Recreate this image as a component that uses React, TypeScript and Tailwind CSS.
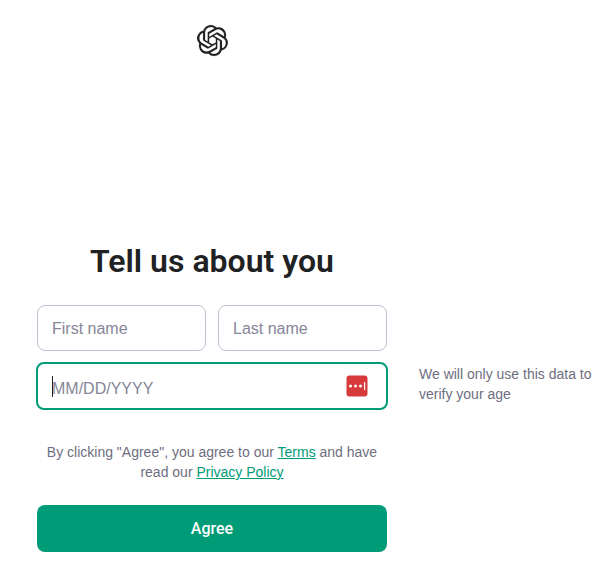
import type { ComponentProps } from "react";
import { SiOpenai } from "react-icons/si";

function Field({ label, className = "", ...rest }: ComponentProps<"input"> & { label: string }) {
  return (
    <input
      type="text"
      aria-label={label}
      className={`w-full min-w-0 flex-1 rounded-lg bg-white px-[14px] text-base text-[#202123] outline-none placeholder:text-[#868698] placeholder:opacity-100 ${className}`}
      {...rest}
    />
  );
}

function PasswordManagerIcon() {
  return (
    <svg viewBox="0 0 22 22" className="h-[22px] w-[22px]" aria-hidden="true">
      <rect x="0.5" y="0.5" width="21" height="21" rx="3" fill="#d63a3a" />
      <circle cx="4.5" cy="11" r="1.5" fill="#fff" />
      <circle cx="9.5" cy="11" r="1.5" fill="#fff" />
      <circle cx="14.5" cy="11" r="1.5" fill="#fff" />
      <rect x="18" y="7" width="1.2" height="8" fill="#fff" />
    </svg>
  );
}

export default function App() {
  return (
    <main className="grid grid-cols-[minmax(0,350px)_minmax(0,1fr)] gap-x-8 bg-white pt-6 pr-2 pb-8 pl-[37px] font-['Liberation_Sans',Arial,sans-serif] text-[#202123]">
      <header className="col-start-1 flex h-8 items-center justify-center">
        <SiOpenai
          className="h-[31px] w-[31px] overflow-visible stroke-[#202123] stroke-[0.1] text-[#202123]"
          aria-label="OpenAI"
        />
      </header>

      <h1 className="col-start-1 mt-[185px] mb-6 text-center font-['Roboto','Liberation_Sans',sans-serif] text-[32px] leading-10 font-semibold whitespace-nowrap">
        Tell us about you
      </h1>

      <div className="col-start-1 flex gap-3">
        <Field label="First name" placeholder="First name" className="h-[46px] border border-[#c0c0d0] pt-0.5" />
        <Field label="Last name" placeholder="Last name" className="h-[46px] border border-[#c0c0d0] pt-0.5" />
      </div>

      <div className="relative col-start-1 mt-[11px] -mr-px -ml-px flex">
        <Field label="Birthday" placeholder="MM/DD/YYYY" className="h-12 border-2 border-[#009b77] pt-1.5" />
        <span className="absolute top-[14px] left-4 h-[21px] w-px bg-[#202123]" aria-hidden="true" />
        <span className="absolute top-[13px] right-5">
          <PasswordManagerIcon />
        </span>
      </div>
      <p className="col-start-2 mt-[13px] text-sm leading-5 text-[#6e6e80]">
        We will only use this data to verify your age
      </p>

      <p className="col-start-1 mt-8 mb-[23px] text-center text-sm leading-5 text-[#6e6e80]">
        By clicking "Agree", you agree to our{" "}
        <a href="#terms" className="text-[#009b77] underline">
          Terms
        </a>{" "}
        and have read our{" "}
        <a href="#privacy" className="text-[#009b77] underline">
          Privacy Policy
        </a>
      </p>

      <button type="submit" className="col-start-1 h-[47px] rounded-lg bg-[#009b77] font-['Roboto','Liberation_Sans',sans-serif] text-base font-medium text-white">
        Agree
      </button>
    </main>
  );
}
